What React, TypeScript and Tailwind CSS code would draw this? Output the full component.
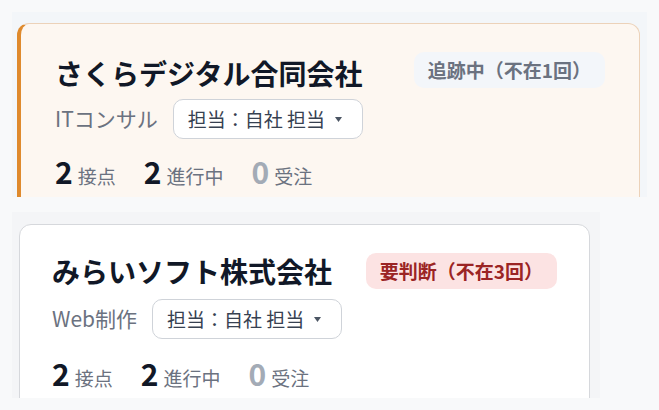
import { ReactNode } from 'react';

type Stat = { value: number; label: string; muted?: boolean };

const stats: Stat[] = [
  { value: 2, label: '接点' },
  { value: 2, label: '進行中' },
  { value: 0, label: '受注', muted: true },
];

function Badge({ tone, children }: { tone: 'gray' | 'red'; children: ReactNode }) {
  const cls =
    tone === 'gray'
      ? 'bg-[#f3f6fa] text-[#6b7280]'
      : 'mt-[3px] bg-[#fce3e3] text-[#9b2424]';
  return (
    <span className={`inline-flex h-[36px] items-center rounded-[10px] px-[14px] text-[19px] font-semibold ${cls}`}>
      {children}
    </span>
  );
}

function CompanyCard({
  name,
  industry,
  badge,
  highlighted,
}: {
  name: string;
  industry: string;
  badge: ReactNode;
  highlighted?: boolean;
}) {
  return (
    <div
      className={
        highlighted
          ? 'rounded-[12px] border border-[#ecd2b9] border-l-4 border-l-[#df8a2d] bg-[#fdf7f1] pl-[34px] pr-[34px] pt-[28px] pb-6'
          : 'rounded-[12px] border border-[#d6d8dc] bg-white pl-[32px] pr-[32px] pt-[25px] pb-6'
      }
    >
      {/* Header */}
      <div className="flex items-start justify-between">
        <h2 className="text-[28px] font-bold leading-[42px] text-[#111827]">{name}</h2>
        {badge}
      </div>

      {/* Industry + owner select */}
      <div className={`flex items-center gap-[15px] ${highlighted ? 'mt-[5px]' : 'mt-[7px]'}`}>
        <span className="text-[21px] text-[#6b7280]">{industry}</span>
        <button className="flex h-[40px] w-[190px] items-center rounded-[10px] border border-[#cfd3d9] bg-white pl-[14px] text-[19px] text-[#374151]">
          担当：自社 担当
          <svg className="ml-[10px]" width="7" height="5" viewBox="0 0 7 5">
            <path d="M0 0h7L3.5 5z" fill="#4b5563" />
          </svg>
        </button>
      </div>

      {/* Stats */}
      <div className={`flex h-[36px] items-center gap-[28px] ${highlighted ? 'mt-[16px]' : 'mt-[18px]'}`}>
        {stats.map((s) => (
          <div key={s.label} className="flex items-baseline gap-[5px]">
            <span className={`text-[30px] font-bold leading-none ${s.muted ? 'text-[#a3abb6]' : 'text-[#111827]'}`}>
              {s.value}
            </span>
            <span className="text-[19px] text-[#6b7280]">{s.label}</span>
          </div>
        ))}
      </div>
    </div>
  );
}

export default function App() {
  return (
    <div
      className="min-h-screen w-[659px] bg-[#f8f9fa] pt-[12px]"
      style={{ fontFamily: '"Noto Sans CJK JP", "Noto Sans", sans-serif' }}
    >
      <div className="ml-[12px] h-[185px] w-[635px] overflow-hidden bg-[#f3f6f9] pl-[5px] pt-[11px]">
        <div className="w-[623px]">
          <CompanyCard
            highlighted
            name="さくらデジタル合同会社"
            industry="ITコンサル"
            badge={<Badge tone="gray">追跡中（不在1回）</Badge>}
          />
        </div>
      </div>

      <div className="ml-[12px] mt-[15px] h-[186px] w-[588px] overflow-hidden bg-[#f4f5f7] pl-[7px] pt-[12px]">
        <div className="w-[571px]">
          <CompanyCard
            name="みらいソフト株式会社"
            industry="Web制作"
            badge={<Badge tone="red">要判断（不在3回）</Badge>}
          />
        </div>
      </div>
    </div>
  );
}
